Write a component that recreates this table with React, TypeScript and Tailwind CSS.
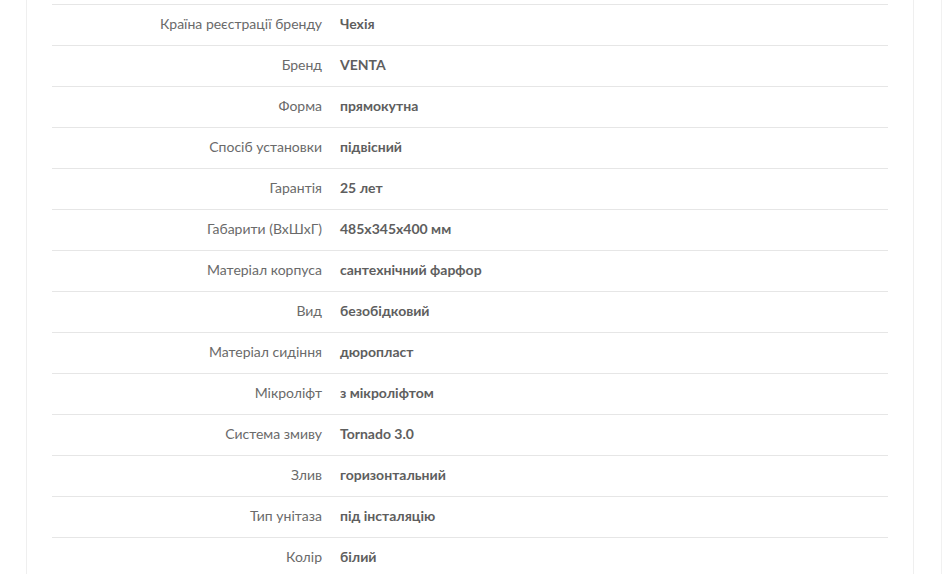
import React from 'react';

const specs: [string, string][] = [
  ['Країна реєстрації бренду', 'Чехія'],
  ['Бренд', 'VENTA'],
  ['Форма', 'прямокутна'],
  ['Спосіб установки', 'підвісний'],
  ['Гарантія', '25 лет'],
  ['Габарити (ВхШхГ)', '485x345x400 мм'],
  ['Матеріал корпуса', 'сантехнічний фарфор'],
  ['Вид', 'безобідковий'],
  ['Матеріал сидіння', 'дюропласт'],
  ['Мікроліфт', 'з мікроліфтом'],
  ['Система змиву', 'Tornado 3.0'],
  ['Злив', 'горизонтальний'],
  ['Тип унітаза', 'під інсталяцію'],
  ['Колір', 'білий'],
];

export default function App() {
  return (
    <div className="w-[943px] h-[574px] overflow-hidden bg-white font-['Lato','Liberation_Sans',sans-serif]">
      <div className="w-[942px] h-full border-r border-[#f1f1f1]">
        <div className="ml-[26px] w-[888px] h-full border-x border-[#efefef] px-[25px] pt-[4px]">
          <table className="w-full border-collapse text-[14px]">
            <tbody>
              {specs.map(([label, value]) => (
                <tr key={label} className="h-[41px] border-t border-[#e6e6e6]">
                  <td className="w-[280px] pr-[10px] pb-[4px] text-right text-[#6a6a6a]">{label}</td>
                  <td className="pl-[8px] pb-[4px] font-bold text-[#5e5e5e]">{value}</td>
                </tr>
              ))}
            </tbody>
          </table>
        </div>
      </div>
    </div>
  );
}
